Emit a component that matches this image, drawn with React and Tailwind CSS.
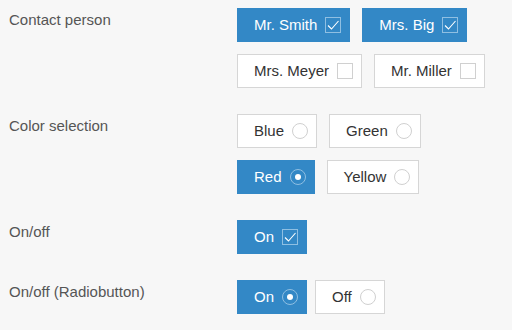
import React from 'react'

const font = { fontFamily: '"Liberation Sans", Arial, sans-serif' }

function CheckBox({ checked, dark }) {
  return (
    <span
      className={`inline-flex h-4 w-4 items-center justify-center border ${
        dark ? 'border-[#8fbfe2]' : 'border-[#d0d0d0] bg-white'
      }`}
    >
      {checked && (
        <svg width="14" height="14" viewBox="0 0 14 14" fill="none">
          <path d="M2 7.5 L5.5 11 L12.5 3" stroke="#fff" strokeWidth="1.1" />
        </svg>
      )}
    </span>
  )
}

function Radio({ checked, dark }) {
  return (
    <span
      className={`inline-flex h-4 w-4 items-center justify-center rounded-full border ${
        dark ? 'border-[#8fbfe2]' : 'border-[#d0d0d0] bg-white'
      }`}
    >
      {checked && <span className="h-[6px] w-[6px] rounded-full bg-white" />}
    </span>
  )
}

function Choice({ label, active, type }) {
  return (
    <button
      type="button"
      className={`flex h-[34px] items-center gap-2 border pl-4 pr-2 text-[15px] ${
        active
          ? 'border-[#3388c6] bg-[#3388c6] text-white'
          : 'border-[#d6d6d6] bg-white text-[#333]'
      }`}
    >
      <span>{label}</span>
      {type === 'radio' ? <Radio checked={active} dark={active} /> : <CheckBox checked={active} dark={active} />}
    </button>
  )
}

function Row({ label, children, gap = 'gap-3' }) {
  return (
    <div className="flex items-start">
      <div className="w-[237px] shrink-0 pl-[9px] pt-[2px] text-[15px] leading-5 text-[#555]">{label}</div>
      <div className={`flex w-[260px] flex-wrap gap-y-3 ${gap}`}>{children}</div>
    </div>
  )
}

export default function App() {
  return (
    <div className="flex h-[330px] w-[512px] flex-col gap-[26px] bg-[#f7f7f7] pt-2" style={font}>
      <Row label="Contact person">
        <Choice label="Mr. Smith" active />
        <Choice label="Mrs. Big" active />
        <Choice label="Mrs. Meyer" />
        <Choice label="Mr. Miller" />
      </Row>
      <Row label="Color selection">
        <Choice label="Blue" type="radio" />
        <Choice label="Green" type="radio" />
        <Choice label="Red" type="radio" active />
        <Choice label="Yellow" type="radio" />
      </Row>
      <Row label="On/off">
        <Choice label="On" active />
      </Row>
      <Row label="On/off (Radiobutton)" gap="gap-2">
        <Choice label="On" type="radio" active />
        <Choice label="Off" type="radio" />
      </Row>
    </div>
  )
}
